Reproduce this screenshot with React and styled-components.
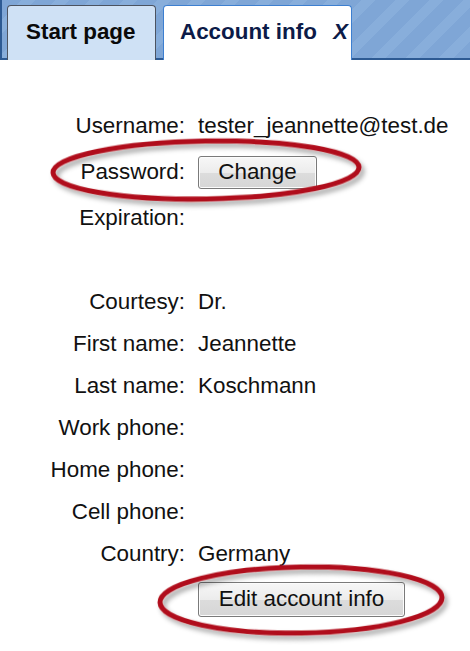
import React from 'react';
import styled, { createGlobalStyle } from 'styled-components';

const GlobalStyle = createGlobalStyle`
  body {
    margin: 0;
    background: #ffffff;
    font-family: "Liberation Sans", Arial, sans-serif;
    color: #111;
  }
`;

const Page = styled.div`
  position: relative;
  width: 470px;
  height: 651px;
  overflow: hidden;
  background: #fff;
`;

const TabBar = styled.div`
  height: 58px;
  display: flex;
  align-items: flex-end;
  gap: 7px;
  padding-left: 5px;
  border-left: 2px solid #2d5a93;
  border-bottom: 2px solid #2d5a93;
  background: repeating-linear-gradient(
    135deg,
    #7fa6d6 0px,
    #7fa6d6 14px,
    #88aedb 14px,
    #88aedb 24px
  );
`;

const Tab = styled.div`
  box-sizing: border-box;
  height: 55px;
  margin-bottom: -2px;
  display: flex;
  align-items: center;
  white-space: nowrap;
  font-weight: bold;
  font-size: 22.4px;
  border-radius: 4px 4px 0 0;
  border: 1px solid ${p => (p.active ? '#3d7fd0' : '#4c5360')};
  border-bottom: none;
  background: ${p => (p.active ? '#ffffff' : '#cfe1f5')};
  color: ${p => (p.active ? '#0c1b48' : '#0a0a0a')};
  padding: 0 0 2px ${p => (p.active ? 16 : 18)}px;
  width: ${p => p.width}px;
`;

const CloseMark = styled.span`
  margin-left: auto;
  padding-right: 3px;
  font-style: italic;
  font-weight: bold;
  font-size: 22px;
  color: #0c1b48;
`;

const Form = styled.div`
  display: grid;
  grid-template-columns: 185px 1fr;
  column-gap: 13px;
  padding-top: 45px;
  font-size: 22.4px;
`;

const Label = styled.div`
  height: ${p => p.h || 42}px;
  display: flex;
  align-items: center;
  justify-content: flex-end;
  white-space: nowrap;
`;

const Value = styled.div`
  height: ${p => p.h || 42}px;
  display: flex;
  align-items: center;
  white-space: nowrap;
`;

const Button = styled.button`
  box-sizing: border-box;
  width: ${p => p.w}px;
  height: ${p => p.hgt}px;
  font-family: "Liberation Sans", Arial, sans-serif;
  font-size: 22.4px;
  color: #111;
  border: 1px solid #7a7a7a;
  border-radius: 3px;
  background: linear-gradient(#f7f7f7 0%, #ececec 50%, #dcdcdc 51%, #d6d6d6 100%);
  box-shadow: inset 0 0 0 1px #fcfcfc;
  padding: 0;
`;

const Marks = styled.svg`
  position: absolute;
  left: 0;
  top: 0;
  pointer-events: none;
`;

const rows = [
  ['Username:', 'tester_jeannette@test.de'],
  ['Password:', 'change', 50],
  ['Expiration:', ''],
  ['', ''],
  ['Courtesy:', 'Dr.'],
  ['First name:', 'Jeannette'],
  ['Last name:', 'Koschmann'],
  ['Work phone:', ''],
  ['Home phone:', ''],
  ['Cell phone:', ''],
  ['Country:', 'Germany'],
  ['', 'edit', 48],
];

export default function App() {
  return (
    <Page>
      <GlobalStyle />
      <TabBar>
        <Tab width={149}>Start page</Tab>
        <Tab active width={189}>
          Account info<CloseMark>X</CloseMark>
        </Tab>
      </TabBar>
      <Form>
        {rows.map(([label, value, h], i) => (
          <React.Fragment key={i}>
            <Label h={h}>{label}</Label>
            <Value h={h}>
              {value === 'change' ? (
                <Button w={119} hgt={33}>Change</Button>
              ) : value === 'edit' ? (
                <Button w={207} hgt={35}>Edit account info</Button>
              ) : (
                value
              )}
            </Value>
          </React.Fragment>
        ))}
      </Form>
      <Marks width="470" height="651">
        <defs>
          <filter id="sh" x="-20%" y="-40%" width="140%" height="180%">
            <feDropShadow dx="3" dy="4" stdDeviation="2.5" floodColor="#000" floodOpacity="0.35" />
          </filter>
        </defs>
        <ellipse cx="206" cy="170" rx="153" ry="29" fill="none" stroke="#b0101a" strokeWidth="5" filter="url(#sh)" transform="rotate(-1 206 170)" />
        <ellipse cx="301" cy="600" rx="141" ry="33" fill="none" stroke="#b0101a" strokeWidth="5" filter="url(#sh)" transform="rotate(-1 301 600)" />
      </Marks>
    </Page>
  );
}
